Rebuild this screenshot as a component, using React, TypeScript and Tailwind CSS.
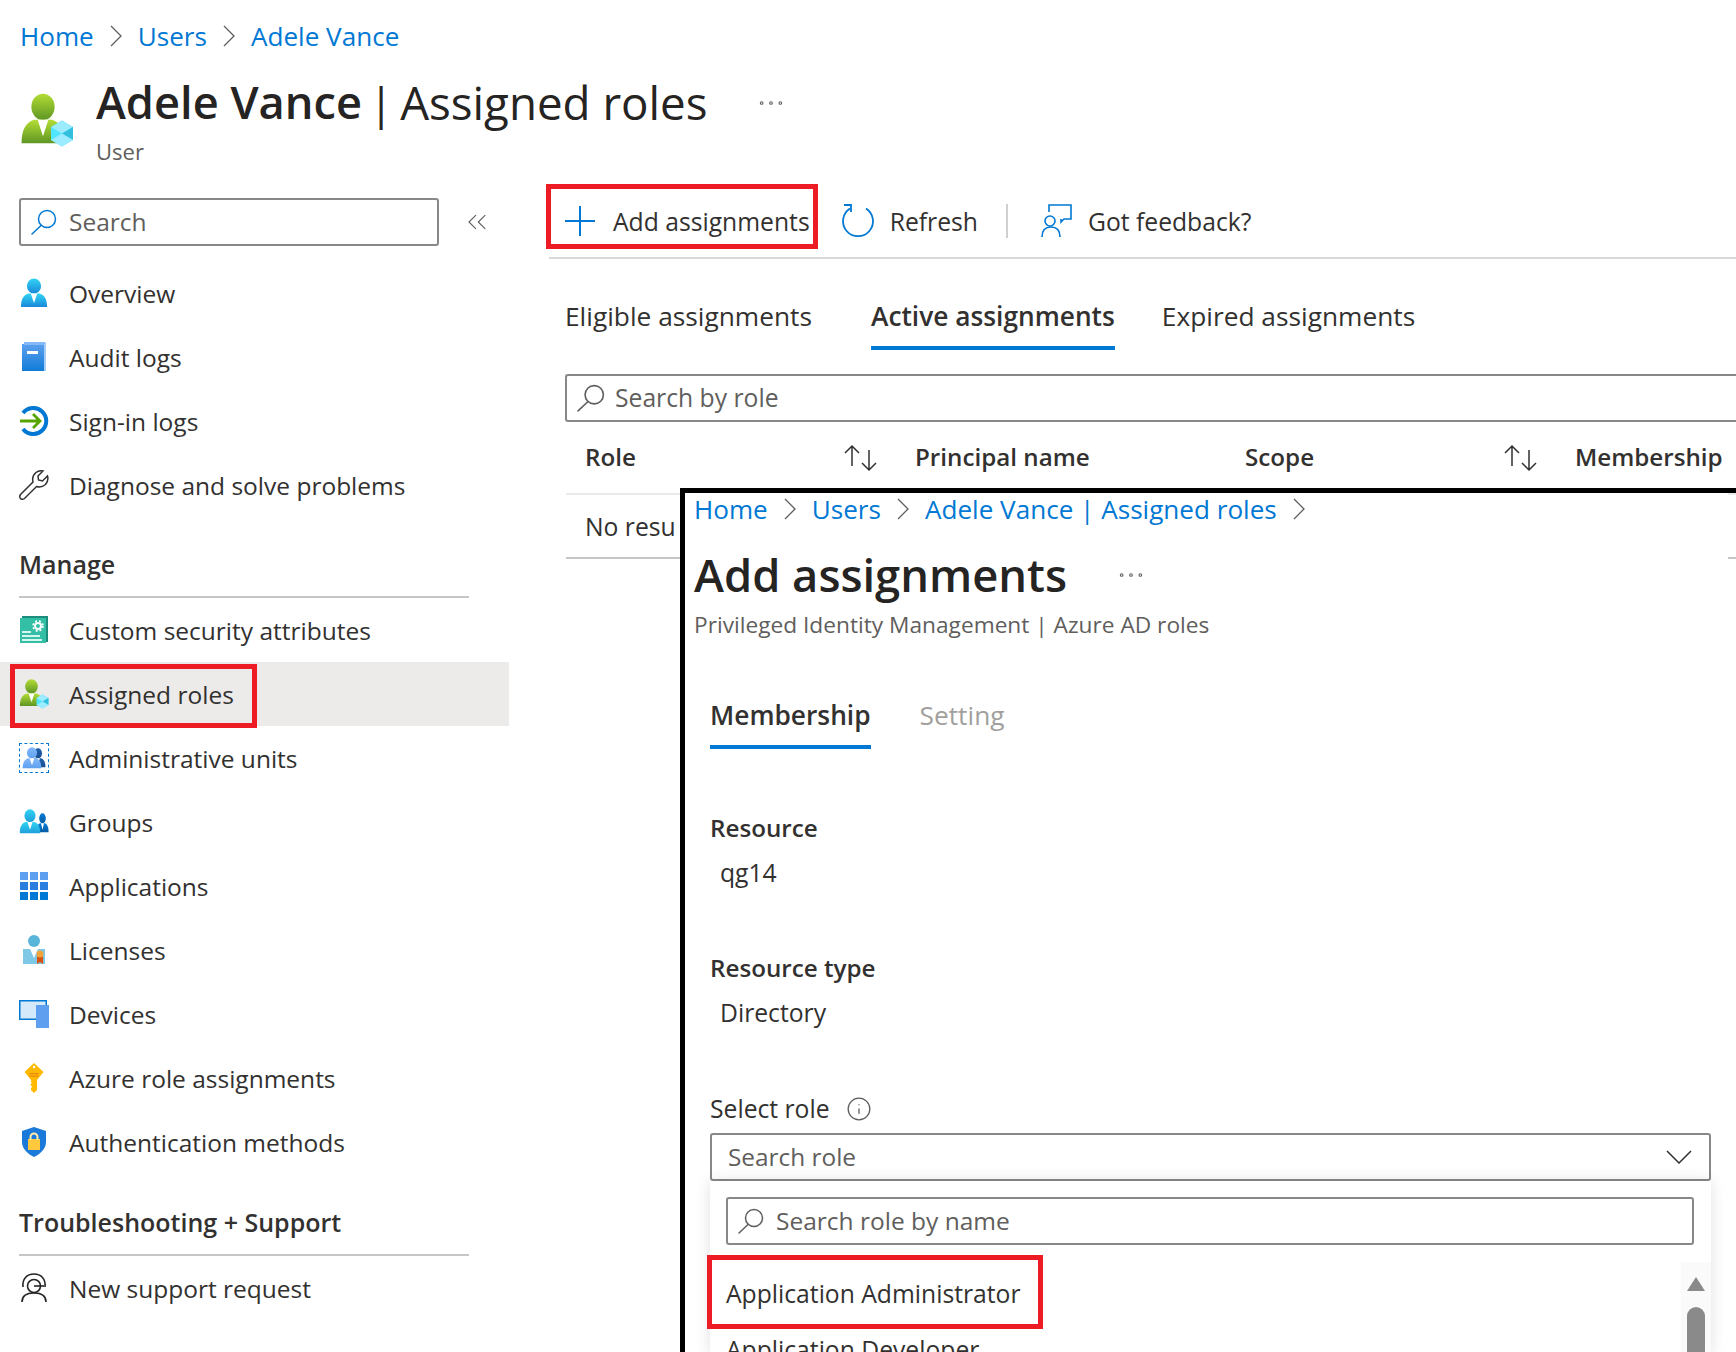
import { Info, Ellipsis, ChevronsLeft } from "lucide-react";

const font = "font-['Open_Sans','Noto_Sans',sans-serif]";

function PersonIcon({ id, from, to, className }: { id: string; from: string; to: string; className?: string }) {
  return (
    <svg viewBox="0 0 30 30" preserveAspectRatio="none" className={className}>
      <defs>
        <linearGradient id={id} x1="0" y1="0" x2="0" y2="1">
          <stop offset="0" stopColor={from} />
          <stop offset="1" stopColor={to} />
        </linearGradient>
      </defs>
      <circle cx="15" cy="8" r="7.6" fill={`url(#${id})`} />
      <path d="M1 29c0-8 3-12 8-13.500h12c5 1.500 8 5.500 8 13.500z" fill={`url(#${id})`} />
      <path d="M11.500 15.500h7L15 25z" fill="#fff" />
    </svg>
  );
}

function Cube({ className }: { className?: string }) {
  return (
    <svg viewBox="0 0 24 26" className={className}>
      <path d="M12 0l11 6.500v13L12 26 1 19.500v-13z" fill="#50e6ff" />
      <path d="M12 0l11 6.500L12 13 1 6.500z" fill="#9cebff" />
      <path d="M23 6.500v13L12 13z" fill="#32bedd" />
      <path d="M1 19.500L12 13l11 6.500L12 26z" fill="#9cebff" />
    </svg>
  );
}

function AssignedIcon({ big }: { big?: boolean }) {
  return (
    <div className={big ? "relative w-[54px] h-[54px]" : "relative w-[30px] h-[30px]"}>
      <PersonIcon
        id={big ? "rg1" : "rg2"}
        from="#b3dc35"
        to="#5e9624"
        className={big ? "w-[46px] h-[52px]" : "w-[25px] h-[28px]"}
      />
      <Cube className={big ? "absolute right-0 bottom-0 w-[24px] h-[27px]" : "absolute right-0 bottom-0 w-[13px] h-[15px]"} />
    </div>
  );
}

function SearchGlyph({ color = "#605e5c", className }: { color?: string; className?: string }) {
  return (
    <svg viewBox="0 0 26 26" className={className} fill="none" stroke={color} strokeWidth="1.500">
      <circle cx="16" cy="10" r="8.500" />
      <path d="M10 16.500L1 25" strokeLinecap="round" />
    </svg>
  );
}

function SortArrows() {
  return (
    <svg viewBox="0 0 34 28" className="w-[34px] h-[28px] shrink-0" fill="none" stroke="#323130" strokeWidth="1.500">
      <path d="M8 22V2M1 9l7-7 7 7" />
      <path d="M25 6v20M18 19l7 7 7-7" />
    </svg>
  );
}

function Chevron() {
  return (
    <svg viewBox="0 0 12 22" className="w-[12px] h-[22px] mx-[16px] shrink-0" fill="none" stroke="#605e5c" strokeWidth="1.300">
      <path d="M1 1l10 10L1 21" />
    </svg>
  );
}

const navTop = [
  { label: "Overview", icon: <PersonIcon id="g1" from="#32d4f5" to="#1988d9" className="w-[28px] h-[30px]" /> },
  {
    label: "Audit logs",
    icon: (
      <svg viewBox="0 0 30 30" className="w-[30px] h-[30px]">
        <defs>
          <linearGradient id="book" x1="0" y1="0" x2="0" y2="1">
            <stop offset="0" stopColor="#5ea0ef" />
            <stop offset="1" stopColor="#0f7cd8" />
          </linearGradient>
        </defs>
        <path d="M3 2h24v27H3z" fill="url(#book)" />
        <path d="M5 0h20a2 2 0 012 2v1H5z" fill="#83b9f9" />
        <path d="M25 2h2v27h-2z" fill="#a6cdf5" />
        <path d="M8 9h11v3H8z" fill="#fff" />
      </svg>
    ),
  },
  {
    label: "Sign-in logs",
    icon: (
      <svg viewBox="0 0 30 30" className="w-[30px] h-[30px]" fill="none">
        <path d="M4 7a13 13 0 110 16" stroke="#0078d4" strokeWidth="4" />
        <path d="M1 15h20M14 8l7 7-7 7" stroke="#57a300" strokeWidth="2.800" />
      </svg>
    ),
  },
  {
    label: "Diagnose and solve problems",
    icon: (
      <svg viewBox="0 0 30 30" className="w-[30px] h-[30px]" fill="none" stroke="#323130" strokeWidth="1.500">
        <path d="M1.500 24.500L14 12c-1-4 0-7 3-9.500 2-1.500 5-2 7-1.500l-5 5 .5 4 4 1 5-5c1 3 0 6-2 8.500-3 2.500-6 3-9 2L5.500 28.500c-1.500 1-3 1-4 0s-1-2.500 0-4z" />
      </svg>
    ),
  },
];

const navManage = [
  {
    label: "Custom security attributes",
    icon: (
      <svg viewBox="0 0 30 30" className="w-[30px] h-[30px]">
        <path d="M3 1h26v26H3z" fill="#1d8c7c" />
        <path d="M1 3h26v25H1z" fill="#32bfa6" />
        <path d="M3 16h9v2H3zM3 20h18v2H3zM3 24h20v2H3z" fill="#d5f5ee" />
        <circle cx="19" cy="11" r="3" fill="none" stroke="#fff" strokeWidth="2" />
        <circle cx="19" cy="11" r="5" fill="none" stroke="#fff" strokeWidth="1.500" strokeDasharray="2 2" />
      </svg>
    ),
  },
];

const navManage2 = [
  {
    label: "Administrative units",
    icon: (
      <div className="relative w-[30px] h-[30px] border border-dashed border-[#0078d4] p-[3px]">
        <PersonIcon id="g3" from="#1e5fae" to="#1a4f8f" className="absolute right-[2px] top-[4px] w-[16px] h-[20px]" />
        <PersonIcon id="g2" from="#83b9f9" to="#5ea0ef" className="absolute left-[2px] top-[3px] w-[20px] h-[22px]" />
      </div>
    ),
  },
  {
    label: "Groups",
    icon: (
      <div className="relative w-[30px] h-[26px]">
        <PersonIcon id="g5" from="#0a7cd8" to="#005ba1" className="absolute right-0 top-[4px] w-[13px] h-[20px]" />
        <PersonIcon id="g4" from="#32d4f5" to="#1e9fd9" className="absolute left-0 top-0 w-[22px] h-[25px]" />
      </div>
    ),
  },
  {
    label: "Applications",
    icon: (
      <svg viewBox="0 0 28 28" className="w-[28px] h-[28px]">
        <path d="M0 0h8v8H0zM10 0h8v8h-8zM20 0h8v8h-8z" fill="#5ea0ef" />
        <path d="M0 10h8v8H0zM10 10h8v8h-8zM20 10h8v8h-8z" fill="#2c7de0" />
        <path d="M0 20h8v8H0zM10 20h8v8h-8zM20 20h8v8h-8z" fill="#0078d4" />
      </svg>
    ),
  },
  {
    label: "Licenses",
    icon: (
      <svg viewBox="0 0 30 30" className="w-[30px] h-[30px]">
        <circle cx="15" cy="6" r="6" fill="#59b4d9" />
        <path d="M4 14h22v15H4z" fill="#7fc8e6" />
        <path d="M11 14h8l-4 9z" fill="#fff" />
        <path d="M18 20h6v9l-3-2-3 2z" fill="#d9530f" />
        <circle cx="21" cy="19" r="3.500" fill="#f2a33a" />
      </svg>
    ),
  },
  {
    label: "Devices",
    icon: (
      <svg viewBox="0 0 30 28" className="w-[30px] h-[28px]">
        <path d="M0 0h28v20H0z" fill="#0078d4" />
        <path d="M1.500 1.500h25v17h-25z" fill="#d4e9fa" />
        <path d="M17 5h13v23H17z" fill="#5ea0ef" />
      </svg>
    ),
  },
  {
    label: "Azure role assignments",
    icon: (
      <svg viewBox="0 0 30 30" className="w-[30px] h-[30px]">
        <path d="M15 0l9.500 9-6.500 8v10l-3 3-3-3v-2l1.500-1.500L11 22l1.500-1.500L12 17 5.500 9z" fill="#ffb900" />
        <circle cx="15" cy="4" r="1.200" fill="#fff" />
        <path d="M10.500 10h9v1.200h-9zM10.500 12.500h9v1.200h-9z" fill="#e8860f" />
      </svg>
    ),
  },
  {
    label: "Authentication methods",
    icon: (
      <svg viewBox="0 0 30 30" className="w-[30px] h-[30px]">
        <path d="M15 0l12 4v11c0 7-6 12-12 15C9 27 3 22 3 15V4z" fill="#1b7ad9" />
        <path d="M9 12h12v11H9z" fill="#ffc83d" />
        <path d="M11.500 13V10a3.500 3.500 0 017 0v3" fill="none" stroke="#ffe9a8" strokeWidth="2" />
      </svg>
    ),
  },
];

function NavRow({ label, icon }: { label: string; icon: React.ReactNode }) {
  return (
    <div className="h-16 pl-[19px] flex items-center text-[24.5px] text-[#323130]">
      <div className="w-[30px] h-[30px] mr-5 flex items-center justify-center shrink-0">{icon}</div>
      <span className="pt-[2px]">{label}</span>
    </div>
  );
}

function SectionHeading({ children }: { children: string }) {
  return (
    <div className="mx-[19px] w-[450px] border-b-2 border-[#c8c6c4] pb-[15px] font-semibold text-[25px] text-[#323130] leading-[34px]">
      {children}
    </div>
  );
}

function Crumbs({ items, trailing }: { items: string[]; trailing?: boolean }) {
  return (
    <div className="flex items-center text-[26.1px] text-[#0078d4] leading-9">
      {items.map((it, i) => (
        <div key={it} className="flex items-center">
          <span>{it}</span>
          {(i < items.length - 1 || trailing) && <Chevron />}
        </div>
      ))}
    </div>
  );
}

function Field({ label, value, top }: { label: string; value: string; top: string }) {
  return (
    <div className={top}>
      <div className="font-semibold text-[24.2px] leading-9 text-[#323130]">{label}</div>
      <div className="pl-[10px] mt-[9px] text-[24.7px] leading-9 text-[#323130]">{value}</div>
    </div>
  );
}

export default function App() {
  return (
    <div className={`${font} relative w-[1736px] h-[1352px] overflow-hidden bg-white`}>
      <div className="pl-5 pt-[18px]">
        <Crumbs items={["Home", "Users", "Adele Vance"]} />
      </div>

      {/* page header */}
      <div className="flex pl-5 pt-[20px] h-[130px]">
        <div className="pt-[19px] w-[76px] shrink-0">
          <AssignedIcon big />
        </div>
        <div>
          <div className="flex items-center h-[56px] text-[45.7px] leading-[56px] text-[#252423]">
            <span className="font-semibold text-[45.2px]">Adele Vance</span>
            <span className="mx-[7px] text-[44px]">|</span>
            <span>Assigned roles</span>
            <Ellipsis className="ml-[47px] w-[32px] h-[32px] text-[#605e5c] mt-[2px]" strokeWidth={0.8} />
          </div>
          <div className="text-[22px] leading-8 text-[#605e5c] mt-[5px]">User</div>
        </div>
      </div>

      <div className="flex">
        {/* sidebar */}
        <div className="w-[509px] shrink-0 pt-[14px]">
          <div className="flex items-center">
            <div className="ml-[19px] w-[420px] h-12 border-2 border-[#8a8886] rounded-[3px] flex items-center pl-[10px]">
              <SearchGlyph color="#0078d4" className="w-[26px] h-[26px]" />
              <span className="ml-[12px] text-[24.5px] text-[#605e5c]">Search</span>
            </div>
            <ChevronsLeft className="ml-[22px] w-[32px] h-[32px] text-[#605e5c]" strokeWidth={0.8} />
          </div>
          <div className="mt-[15px]">
            {navTop.map((n) => (
              <NavRow key={n.label} {...n} />
            ))}
          </div>
          <div className="pt-[30px]">
            <SectionHeading>Manage</SectionHeading>
          </div>
          {navManage.map((n) => (
            <NavRow key={n.label} {...n} />
          ))}
          <div className="relative bg-[#edebe9]">
            <NavRow label="Assigned roles" icon={<AssignedIcon />} />
            <div className="absolute left-[10px] top-[2px] w-[247px] h-[64px] border-[5px] border-[#ed1c24]" />
          </div>
          {navManage2.map((n) => (
            <NavRow key={n.label} {...n} />
          ))}
          <div className="pt-[31px]">
            <SectionHeading>Troubleshooting + Support</SectionHeading>
          </div>
          <NavRow
            label="New support request"
            icon={
              <svg viewBox="0 0 30 30" className="w-[30px] h-[30px]" fill="none" stroke="#252423" strokeWidth="1.600">
                <path d="M4 14C3 6 8 1 15 1s12 5 11 13" />
                <circle cx="15" cy="13" r="6.500" />
                <path d="M15 13h10" />
                <path d="M3 29c0-6 4-9 12-9s12 3 12 9" />
              </svg>
            }
          />
        </div>

        {/* main */}
        <div className="flex-1 ml-[40px] min-w-0">
          <div className="relative h-[75px] border-b-2 border-[#d9d9d9] flex items-center text-[24.7px] text-[#323130]">
            <svg viewBox="0 0 30 30" className="ml-[16px] w-[30px] h-[30px] shrink-0" fill="none" stroke="#0078d4" strokeWidth="2">
              <path d="M15 0v30M0 15h30" />
            </svg>
            <span className="ml-[18px] pt-[2px]">Add assignments</span>
            <svg viewBox="0 0 34 36" className="ml-[31px] w-[34px] h-[36px] shrink-0" fill="none" stroke="#0078d4" strokeWidth="1.800">
              <path d="M9 5.500a15 15 0 1016 0" />
              <path d="M3 2h7v7" />
            </svg>
            <span className="ml-[15px] pt-[2px]">Refresh</span>
            <div className="ml-[28px] w-[2px] h-[34px] bg-[#d2d0ce]" />
            <svg viewBox="0 0 34 34" className="ml-[32px] w-[34px] h-[34px] shrink-0" fill="none" stroke="#0078d4" strokeWidth="1.600">
              <path d="M9 8V1h22v14h-7l-3 3v-3" />
              <circle cx="10" cy="17" r="5" />
              <path d="M2 33c0-7 3-10 9-10s9 3 9 10" />
            </svg>
            <span className="ml-[14px] pt-[2px]">Got feedback?</span>
            <div className="absolute left-[-3px] top-0 w-[272px] h-[65px] border-[5px] border-[#ed1c24]" />
          </div>

          <div className="flex h-[91px] pl-[16px] items-end text-[26.3px] text-[#323130]">
            <div className="h-[74px] pt-[10px] leading-[60px]">Eligible assignments</div>
            <div className="ml-[59px] h-[74px] pt-[10px] leading-[60px] font-semibold border-b-4 border-[#0078d4]">
              Active assignments
            </div>
            <div className="ml-[47px] h-[74px] pt-[10px] leading-[60px]">Expired assignments</div>
          </div>

          <div className="mt-[24px] ml-[16px] h-[48px] border-2 border-r-0 border-[#8a8886] rounded-l-[3px] flex items-center pl-[10px]">
            <SearchGlyph className="w-[28px] h-[28px]" />
            <span className="ml-[10px] text-[24.7px] text-[#605e5c]">Search by role</span>
          </div>

          <div className="ml-[17px] h-[73px] border-b-2 border-[#edebe9] flex items-center font-semibold text-[24.2px] text-[#323130]">
            <div className="pl-[19px] w-[278px]">Role</div>
            <SortArrows />
            <div className="ml-[37px] w-[330px]">Principal name</div>
            <div className="w-[259px]">Scope</div>
            <SortArrows />
            <div className="ml-[37px]">Membership</div>
          </div>
          <div className="ml-[17px] h-[64px] border-b-2 border-[#c8c6c4] flex items-center pl-[19px] pt-[2px] text-[24.7px] text-[#323130]">
            No resu
          </div>
        </div>
      </div>

      {/* add assignments blade, pasted over the page */}
      <div className="absolute left-[680px] top-[488px] right-[8px] bottom-0 bg-white border-l-[5px] border-t-[5px] border-black pl-[9px]">
        <div className="absolute -right-[8px] -top-[5px] w-[8px] h-[5px] bg-black" />
        <div className="-mt-[2px]">
          <Crumbs items={["Home", "Users", "Adele Vance | Assigned roles"]} trailing />
        </div>
        <div className="flex items-center mt-[18px] h-[60px]">
          <span className="font-semibold text-[45.3px] text-[#252423]">Add assignments</span>
          <Ellipsis className="ml-[48px] w-[32px] h-[32px] text-[#605e5c]" strokeWidth={0.8} />
        </div>
        <div className="mt-[4px] text-[22.7px] leading-8 text-[#605e5c]">Privileged Identity Management | Azure AD roles</div>

        <div className="ml-[16px] mt-[48px] flex text-[26.3px]">
          <div className="h-[60px] leading-[52px] font-semibold text-[#323130] border-b-4 border-[#0078d4]">Membership</div>
          <div className="ml-[49px] h-[60px] leading-[52px] text-[#a19f9d]">Setting</div>
        </div>

        <div className="ml-[16px]">
          <Field label="Resource" value="qg14" top="mt-[61px]" />
          <Field label="Resource type" value="Directory" top="mt-[59px]" />
          <div className="flex items-center mt-[60px] h-9 text-[24.7px] text-[#323130]">
            Select role
            <Info className="ml-[16px] w-[26px] h-[26px] text-[#605e5c]" strokeWidth={1.2} />
          </div>

          <div className="mt-[6px] w-[1001px] h-[48px] border-2 border-[#8a8886] rounded-[3px] flex items-center justify-between pl-[16px] pr-[17px] text-[24.4px] text-[#605e5c]">
            <span className="pt-[1px]">Search role</span>
            <svg viewBox="0 0 26 14" className="w-[26px] h-[14px] shrink-0" fill="none" stroke="#323130" strokeWidth="1.500">
              <path d="M1 1l12 12L25 1" />
            </svg>
          </div>

          <div className="relative w-[1001px] h-[173px] overflow-hidden shadow-[0_0_14px_rgba(0,0,0,0.12)] bg-white">
            <div className="ml-[16px] mt-[16px] w-[968px] h-[48px] border-2 border-[#8a8886] rounded-[3px] flex items-center pl-[10px] text-[24.5px] text-[#605e5c]">
              <SearchGlyph className="w-[26px] h-[26px]" />
              <span className="ml-[12px]">Search role by name</span>
            </div>
            <div className="ml-[16px] mt-[31px] text-[24.7px] leading-9 text-[#323130]">Application Administrator</div>
            <div className="ml-[16px] mt-[20px] text-[24.7px] leading-9 text-[#323130]">Application Developer</div>
            <div className="absolute right-0 top-[81px] bottom-0 w-[30px] bg-[#fafafa]">
              <div className="mx-auto mt-[15px] w-0 h-0 border-l-[9px] border-r-[9px] border-b-[14px] border-l-transparent border-r-transparent border-b-[#8a8a8a]" />
              <div className="mx-auto mt-[16px] w-[18px] h-[60px] rounded-t-full bg-[#8a8a8a]" />
            </div>
          </div>
        </div>

        <div className="absolute left-[22px] top-[762px] w-[336px] h-[74px] border-[5px] border-[#ed1c24]" />
      </div>
    </div>
  );
}
